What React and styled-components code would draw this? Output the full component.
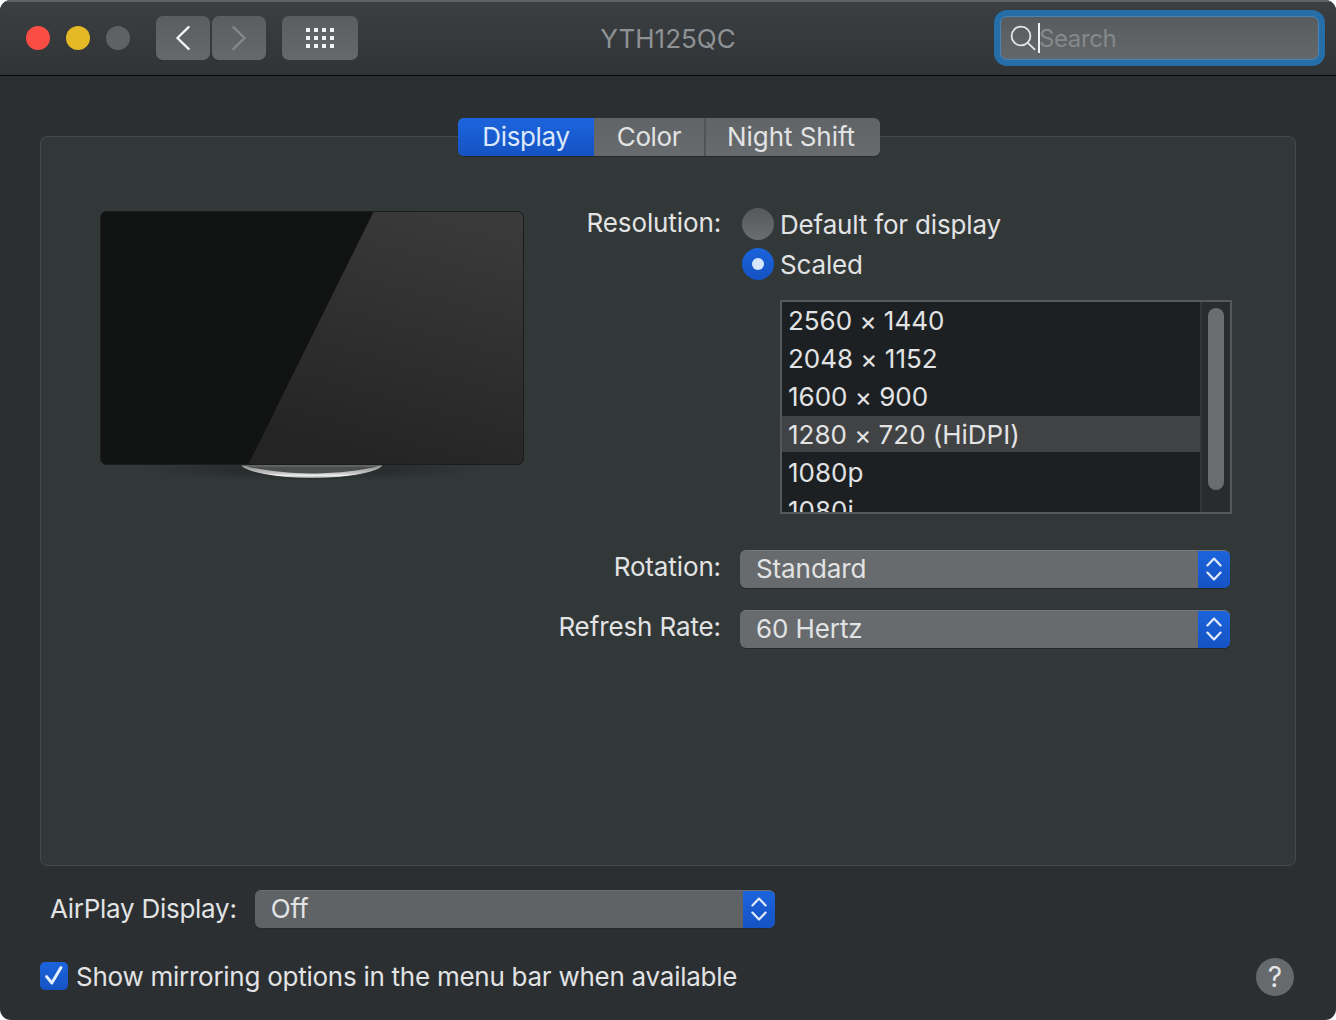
import React from "react";
import styled, { createGlobalStyle } from "styled-components";

const Global = createGlobalStyle`
  html, body { margin: 0; padding: 0; background: #fff; }
  * { box-sizing: border-box; }
`;

const Window = styled.div`
  width: 1336px;
  height: 1020px;
  border-radius: 11px;
  overflow: hidden;
  background: #2b2f31;
  font-family: Inter, "Liberation Sans", sans-serif;
  font-size: 26px;
  color: #e2e3e4;
  display: flex;
  flex-direction: column;
`;

const TitleBar = styled.header`
  height: 76px;
  flex: none;
  display: flex;
  align-items: center;
  padding: 0 11px 1px 26px;
  background: linear-gradient(#3b3f42, #303437);
  border-top: 2px solid #5f6264;
  border-bottom: 1px solid #060708;
`;

const Lights = styled.div`
  display: flex;
  gap: 16px;
  margin-right: 26px;
`;

const Light = styled.span`
  width: 24px;
  height: 24px;
  border-radius: 50%;
  background: ${(p) => p.$color};
`;

const NavGroup = styled.div`
  display: flex;
  gap: 2px;
  margin-right: 16px;
`;

const ToolButton = styled.button`
  width: ${(p) => p.$width}px;
  height: 44px;
  padding: 0;
  border: 0;
  border-radius: 7px;
  background: linear-gradient(#5a5e61, #66696c);
  display: flex;
  align-items: center;
  justify-content: center;
`;

const Title = styled.div`
  flex: 1;
  text-align: center;
  color: #8e9294;
  margin-left: -4px;
  padding-right: 12px;
`;

const SearchRing = styled.div`
  width: 331px;
  height: 56px;
  padding: 6px;
  border-radius: 13px;
  background: #256ea8;
`;

const SearchField = styled.div`
  height: 100%;
  border-radius: 7px;
  border: 1px solid #4a84b4;
  background: linear-gradient(#585c5f, #63676a);
  display: flex;
  align-items: center;
  padding-left: 9px;
  color: #85898c;
`;

const SearchHint = styled.span`
  font-size: 24px;
  letter-spacing: -0.4px;
  margin-left: -1px;
`;

const Caret = styled.span`
  width: 2px;
  height: 30px;
  background: #f2f2f2;
  margin-left: 2px;
`;

const Main = styled.main`
  flex: 1;
  display: flex;
  flex-direction: column;
  padding: 60px 40px 0;
`;

const Panel = styled.section`
  height: 730px;
  flex: none;
  border: 1px solid #46494b;
  border-radius: 7px;
  background: #323738;
`;

const Tabs = styled.div`
  width: 422px;
  height: 38px;
  margin: -19px 0 0 417px;
  display: flex;
  border-radius: 6px;
  overflow: hidden;
  background: linear-gradient(#606466, #686b6d);
  box-shadow: 0 1px 0 #26292b;
`;

const Tab = styled.div`
  width: ${(p) => p.$width}px;
  display: flex;
  align-items: center;
  justify-content: center;
  padding: 0 ${(p) => (p.$divided ? 4 : 0)}px 2px 0;
  letter-spacing: ${(p) => p.$spacing}px;
  color: ${(p) => (p.$active ? "#dce8fb" : "#e2e3e4")};
  background: ${(p) => (p.$active ? "linear-gradient(#1c64dc, #1553c4)" : "transparent")};
  border-left: ${(p) => (p.$divided ? "2px solid #505456" : "0")};
`;

const PanelBody = styled.div`
  display: flex;
  padding: 55px 0 0 59px;
`;

const MonitorFrame = styled.div`
  width: 424px;
  flex: none;
  margin-right: 35px;
  line-height: 0;
`;

const Form = styled.div`
  display: grid;
  grid-template-columns: 162px 490px;
  column-gap: 19px;
  align-content: start;
  margin-top: -3px;
`;

const Label = styled.div`
  text-align: right;
  white-space: nowrap;
  line-height: 38px;
  letter-spacing: -0.12px;
  justify-self: end;
  margin-top: ${(p) => p.$offset || 0}px;
`;

const RadioColumn = styled.div`
  display: flex;
  flex-direction: column;
  gap: 8px;
`;

const RadioRow = styled.div`
  display: flex;
  align-items: center;
  gap: 6px;
  padding-left: 2px;
  height: 32px;
  letter-spacing: -0.17px;
`;

const Radio = styled.span`
  width: 32px;
  height: 32px;
  border-radius: 50%;
  flex: none;
  display: flex;
  align-items: center;
  justify-content: center;
  background: ${(p) =>
    p.$on ? "linear-gradient(#1b63dc, #1552c2)" : "linear-gradient(#55595b, #6a6d6f)"};
`;

const RadioDot = styled.span`
  width: 12px;
  height: 12px;
  border-radius: 50%;
  background: #d8e6fb;
`;

const List = styled.div`
  width: 452px;
  height: 214px;
  margin: 20px 0 0 40px;
  border: 2px solid #55595b;
  display: flex;
  overflow: hidden;
`;

const ListRows = styled.div`
  flex: 1;
  height: 100%;
  background: #1c2023;
  overflow: hidden;
`;

const ListRow = styled.div`
  height: 36px;
  margin-bottom: 2px;
  padding-left: 6px;
  line-height: 38px;
  letter-spacing: -0.02px;
  background: ${(p) => (p.$selected ? "#414243" : "transparent")};
`;

const ScrollTrack = styled.div`
  width: 30px;
  flex: none;
  background: #2a2b2c;
  border-left: 2px solid #333638;
  padding: 6px 6px 0 6px;
`;

const ScrollThumb = styled.div`
  width: 16px;
  height: 182px;
  border-radius: 8px;
  background: #6a6c6d;
`;

const Select = styled.div`
  width: ${(p) => p.$width}px;
  height: 38px;
  border-radius: 6px;
  display: flex;
  align-items: center;
  padding-left: 16px;
  margin-top: ${(p) => p.$offset || 0}px;
  overflow: hidden;
  background: ${(p) => (p.$dim ? "#5f6366" : "#686b6d")};
  border-top: 1px solid ${(p) => (p.$dim ? "#6b6f72" : "#77797b")};
  box-shadow: 0 1px 0 #26292b;
  letter-spacing: -0.1px;
`;

const SelectValue = styled.span`
  flex: 1;
  margin-top: -2px;
`;

const Stepper = styled.span`
  width: 32px;
  height: 38px;
  margin-top: -1px;
  flex: none;
  display: flex;
  align-items: center;
  justify-content: center;
  background: linear-gradient(#1c64dc, #1553c4);
`;

const Footer = styled.footer`
  display: flex;
  flex-direction: column;
`;

const AirPlayRow = styled.div`
  display: flex;
  align-items: center;
  gap: 18px;
  margin-top: 24px;
  padding-left: 10px;
`;

const AirLabel = styled.span`
  letter-spacing: -0.27px;
  white-space: nowrap;
  margin-top: -1px;
`;

const CheckRow = styled.div`
  display: flex;
  align-items: center;
  margin-top: 30px;
  height: 38px;
`;

const CheckBox = styled.span`
  width: 28px;
  height: 28px;
  flex: none;
  margin: -2px 8px 0 0;
  border-radius: 5px;
  background: linear-gradient(#1c64dc, #1553c4);
  display: flex;
  align-items: center;
  justify-content: center;
`;

const CheckText = styled.span`
  flex: 1;
  letter-spacing: -0.26px;
  white-space: nowrap;
  margin-top: -2px;
`;

const Help = styled.span`
  width: 38px;
  height: 38px;
  margin-right: 2px;
  border-radius: 50%;
  background: #666a6c;
  color: #e4e5e6;
  display: flex;
  align-items: center;
  justify-content: center;
  font-size: 28px;
`;

const BackIcon = () => (
  <svg width="14" height="24" viewBox="0 0 14 24" fill="none" stroke="#f2f3f3" strokeWidth="2.4" strokeLinecap="round" strokeLinejoin="round">
    <path d="M12.6 1.2 1.4 12l11.2 10.8" />
  </svg>
);

const ForwardIcon = () => (
  <svg width="14" height="24" viewBox="0 0 14 24" fill="none" stroke="#85898b" strokeWidth="2.4" strokeLinecap="round" strokeLinejoin="round">
    <path d="M1.4 1.2 12.6 12 1.4 22.8" />
  </svg>
);

const GridIcon = () => (
  <svg width="30" height="20" viewBox="0 0 30 20" fill="#f1f2f2">
    {[0, 1, 2].map((r) =>
      [0, 1, 2, 3].map((c) => <rect key={`${r}${c}`} x={1 + c * 8} y={r * 8} width="4" height="4" />)
    )}
  </svg>
);

const SearchIcon = () => (
  <svg width="26" height="28" viewBox="0 0 26 28" fill="none" stroke="#e4e5e6" strokeWidth="1.8" strokeLinecap="round">
    <circle cx="11" cy="12" r="9.4" />
    <path d="M17.8 18.8 24.6 25.4" />
  </svg>
);

const StepIcon = () => (
  <svg width="16" height="24" viewBox="0 0 16 24" fill="none" stroke="#e3ebfa" strokeWidth="2.2" strokeLinecap="round" strokeLinejoin="round">
    <path d="M1.4 8.4 8 1.6l6.6 6.8" />
    <path d="M1.4 15.6 8 22.4l6.6-6.8" />
  </svg>
);

const CheckIcon = () => (
  <svg width="20" height="22" viewBox="0 0 20 22" fill="none" stroke="#e6effc" strokeWidth="3" strokeLinecap="round" strokeLinejoin="round">
    <path d="M2.6 11.6 7.8 18 17 2.6" />
  </svg>
);

const MonitorArt = () => (
  <svg width="424" height="280" viewBox="0 0 424 280">
    <defs>
      <linearGradient id="glass" x1="0.75" y1="0" x2="0.45" y2="1">
        <stop offset="0" stopColor="#3a3a3a" />
        <stop offset="1" stopColor="#242424" />
      </linearGradient>
      <linearGradient id="base" x1="0" y1="0" x2="0" y2="1">
        <stop offset="0" stopColor="#8a8b8b" />
        <stop offset="0.6" stopColor="#c4c4c4" />
        <stop offset="0.8" stopColor="#f2f2f2" />
        <stop offset="1" stopColor="#777878" />
      </linearGradient>
      <radialGradient id="shade" cx="0.5" cy="0.5" r="0.5">
        <stop offset="0" stopColor="#1a1d1e" stopOpacity="0.75" />
        <stop offset="1" stopColor="#1a1d1e" stopOpacity="0" />
      </radialGradient>
      <clipPath id="screen">
        <rect x="0.5" y="0.5" width="423" height="253" rx="6" />
      </clipPath>
    </defs>
    <ellipse cx="212" cy="258" rx="170" ry="12" fill="url(#shade)" />
    <path d="M141 254C142 260 172 267.5 212 267.5S282 260 283 254z" fill="url(#base)" stroke="#222425" strokeWidth="0.8" />
    <path d="M146 255.2C160 259 186 262.4 212 262.4S264 259 278 255.2z" fill="#4d4e4e" />
    <g clipPath="url(#screen)">
      <rect width="424" height="254" fill="#111212" />
      <path d="M274 0H424V254H148z" fill="url(#glass)" />
    </g>
    <rect x="0.5" y="0.5" width="423" height="253" rx="6" fill="none" stroke="#1a1c1d" />
  </svg>
);

const resolutions = ["2560 × 1440", "2048 × 1152", "1600 × 900", "1280 × 720 (HiDPI)", "1080p", "1080i"];

export default function App() {
  return (
    <>
      <Global />
      <Window>
        <TitleBar>
          <Lights>
            <Light $color="#fc4d45" />
            <Light $color="#e5b926" />
            <Light $color="#5e6265" />
          </Lights>
          <NavGroup>
            <ToolButton $width={54}><BackIcon /></ToolButton>
            <ToolButton $width={54}><ForwardIcon /></ToolButton>
          </NavGroup>
          <ToolButton $width={76}><GridIcon /></ToolButton>
          <Title>YTH125QC</Title>
          <SearchRing>
            <SearchField>
              <SearchIcon />
              <Caret />
              <SearchHint>Search</SearchHint>
            </SearchField>
          </SearchRing>
        </TitleBar>
        <Main>
          <Panel>
            <Tabs>
              <Tab $width={136} $spacing={-0.35} $active>Display</Tab>
              <Tab $width={110} $spacing={-0.35}>Color</Tab>
              <Tab $width={176} $spacing={-0.05} $divided>Night Shift</Tab>
            </Tabs>
            <PanelBody>
              <MonitorFrame><MonitorArt /></MonitorFrame>
              <Form>
                <Label $offset={-4}>Resolution:</Label>
                <div>
                  <RadioColumn>
                    <RadioRow><Radio /><span>Default for display</span></RadioRow>
                    <RadioRow><Radio $on><RadioDot /></Radio><span>Scaled</span></RadioRow>
                  </RadioColumn>
                  <List>
                    <ListRows>
                      {resolutions.map((r, i) => (
                        <ListRow key={r} $selected={i === 3}>{r}</ListRow>
                      ))}
                    </ListRows>
                    <ScrollTrack><ScrollThumb /></ScrollTrack>
                  </List>
                </div>
                <Label $offset={34}>Rotation:</Label>
                <Select $width={490} $offset={36}>
                  <SelectValue>Standard</SelectValue>
                  <Stepper><StepIcon /></Stepper>
                </Select>
                <Label $offset={20}>Refresh Rate:</Label>
                <Select $width={490} $offset={22}>
                  <SelectValue>60 Hertz</SelectValue>
                  <Stepper><StepIcon /></Stepper>
                </Select>
              </Form>
            </PanelBody>
          </Panel>
          <Footer>
            <AirPlayRow>
              <AirLabel>AirPlay Display:</AirLabel>
              <Select $width={520} $dim>
                <SelectValue>Off</SelectValue>
                <Stepper><StepIcon /></Stepper>
              </Select>
            </AirPlayRow>
            <CheckRow>
              <CheckBox><CheckIcon /></CheckBox>
              <CheckText>Show mirroring options in the menu bar when available</CheckText>
              <Help>?</Help>
            </CheckRow>
          </Footer>
        </Main>
      </Window>
    </>
  );
}
